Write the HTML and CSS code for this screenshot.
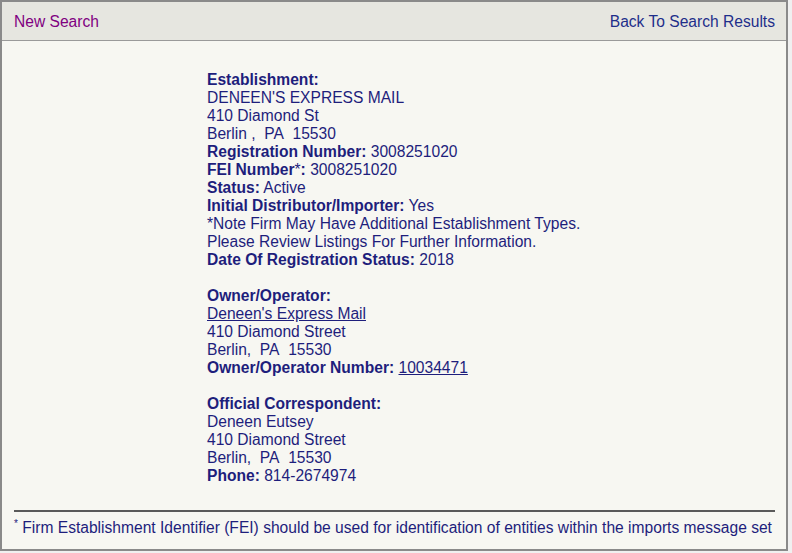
FILE: index.html
```html
<!DOCTYPE html>
<html lang="en">
<head>
    <meta charset="UTF-8">
    <title>Establishment Registration Detail</title>
    <link rel="stylesheet" href="styles.css">
</head>
<body>
    <div class="box">
        <div class="topbar">
            <a href="#" class="visited">New Search</a>
            <a href="#">Back To Search Results</a>
        </div>
        <div class="detail">
            <div class="section">
                <b>Establishment:</b><br>
                DENEEN'S EXPRESS MAIL<br>
                410 Diamond St<br>
                Berlin ,&nbsp; PA&nbsp; 15530<br>
                <b>Registration Number:</b> 3008251020<br>
                <b>FEI Number</b>*<b>:</b> 3008251020<br>
                <b>Status:</b> Active<br>
                <b>Initial Distributor/Importer:</b> Yes<br>
                *Note Firm May Have Additional Establishment Types.<br>
                Please Review Listings For Further Information.<br>
                <b>Date Of Registration Status:</b> 2018
            </div>
            <div class="section">
                <b>Owner/Operator:</b><br>
                <a href="#">Deneen's Express Mail</a><br>
                410 Diamond Street<br>
                Berlin,&nbsp; PA&nbsp; 15530<br>
                <b>Owner/Operator Number:</b> <a href="#">10034471</a>
            </div>
            <div class="section">
                <b>Official Correspondent:</b><br>
                Deneen Eutsey<br>
                410 Diamond Street<br>
                Berlin,&nbsp; PA&nbsp; 15530<br>
                <b>Phone:</b> 814-2674974
            </div>
        </div>
        <div class="footnote">
            <sup>*</sup> Firm Establishment Identifier (FEI) should be used for identification of entities within the imports message set
        </div>
    </div>
</body>
</html>
```
FILE: styles.css
```css
body {
    font-family: "Liberation Sans", Arial, sans-serif;
    font-size: 15.6px;
    background-color: #f0f0f0;
    margin: 0;
    padding: 0 4px 4px 0;
    color: #1e1e7c;
}
.box {
    background: #f7f7f2;
    border: 2px solid #8a8a8a;
}
.topbar {
    display: flex;
    justify-content: space-between;
    align-items: center;
    height: 39px;
    padding: 1px 11px 0 12px;
    box-sizing: border-box;
    background: #e6e6e0;
    border-bottom: 1px solid #9a9a9a;
}
.topbar a {
    color: #1e2e8a;
    text-decoration: none;
}
.topbar a.visited {
    color: #800080;
}
.detail {
    padding: 30px 0 0 205px;
    line-height: 18px;
}
.section {
    margin-bottom: 18px;
}
.section:last-child {
    margin-bottom: 0;
}
.detail a {
    color: #1e1e7c;
}
.footnote {
    margin: 25px 11px 0 12px;
    padding: 7px 0 12px;
    border-top: 2px solid #5a5a5a;
    line-height: 18px;
    white-space: nowrap;
}
.footnote sup {
    font-size: 10px;
    line-height: 0;
}
```
